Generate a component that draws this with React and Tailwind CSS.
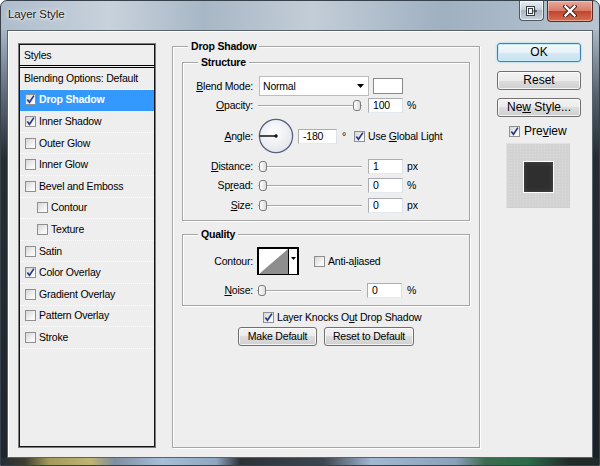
import React from 'react';

const styleItems = [
  { label: 'Drop Shadow', checked: true, selected: true },
  { label: 'Inner Shadow', checked: true },
  { label: 'Outer Glow' },
  { label: 'Inner Glow' },
  { label: 'Bevel and Emboss' },
  { label: 'Contour', sub: true },
  { label: 'Texture', sub: true },
  { label: 'Satin' },
  { label: 'Color Overlay', checked: true },
  { label: 'Gradient Overlay' },
  { label: 'Pattern Overlay' },
  { label: 'Stroke' },
];

const U = ({ children }) => <span className="underline underline-offset-[1px]">{children}</span>;

const Check = ({ checked }) => (
  <span className="flex h-[11px] w-[11px] shrink-0 items-center justify-center border border-[#8f8f8f] bg-[linear-gradient(135deg,#d6d6d6,#f4f4f4_65%,#ffffff)]">
    {checked && (
      <svg width="9" height="9" viewBox="0 0 9 9">
        <path d="M1.3 4.4 L3.5 7.3 L7.9 0.6" fill="none" stroke="#26398e" strokeWidth="1.7" />
      </svg>
    )}
  </span>
);

const Slider = ({ full, className = '' }) => (
  <div
    className={`flex h-[11px] w-[104px] shrink-0 items-center bg-[linear-gradient(to_bottom,transparent_5px,#a9a9a9_5px,#a9a9a9_6px,#ffffff_6px,#ffffff_7px,transparent_7px)] px-[1px] ${full ? 'justify-end' : 'justify-start'} ${className}`}
  >
    <div className="h-[11px] w-[8px] rounded-[3px] border border-[#7b7b7b] bg-[linear-gradient(to_right,#ffffff,#dcdcdc)]" />
  </div>
);

const Field = ({ value, className = 'w-[35px]' }) => (
  <div className={`flex h-[15px] shrink-0 items-center border border-[#abadb3] border-r-[#dbdfe6] border-b-[#e3e9ef] bg-white pl-[4px] ${className}`}>
    <span>{value}</span>
  </div>
);

const Label = ({ children }) => <div className="w-[70px] shrink-0 text-right">{children}</div>;

const Btn = ({ children, className = '', primary }) => (
  <div
    className={`flex h-[19px] shrink-0 items-center justify-center rounded-[3px] border ${
      primary
        ? 'border-[#3c7fb1] bg-[linear-gradient(#f4f9fc_0%,#e6f2f9_50%,#d6e9f4_50%,#c9e1ef_100%)] shadow-[0_0_2px_#7fc9f0,inset_0_0_0_1px_#c6ecfc]'
        : 'border-[#707070] bg-[linear-gradient(#f2f2f2_0%,#ebebeb_50%,#dddddd_50%,#cfcfcf_100%)] shadow-[inset_0_0_0_1px_rgba(255,255,255,0.75)]'
    } ${className}`}
  >
    <span>{children}</span>
  </div>
);

const Group = ({ title, className = '', children }) => (
  <div className={`flex flex-col border border-[#a6a6a6] shadow-[1px_1px_0_#ffffff,inset_1px_1px_0_#ffffff] ${className}`}>
    <div className="-mt-[7px] ml-[15px] self-start bg-[#eeeeee] px-[3px] font-bold leading-[13px]">{title}</div>
    {children}
  </div>
);

const Dial = () => (
  <svg width="36" height="36" viewBox="0 0 36 36" className="shrink-0">
    <defs>
      <radialGradient id="dialFill" cx="0.45" cy="0.4" r="0.65">
        <stop offset="0" stopColor="#ffffff" />
        <stop offset="1" stopColor="#e1e4ea" />
      </radialGradient>
    </defs>
    <circle cx="18" cy="18" r="16.6" fill="url(#dialFill)" stroke="#56627f" strokeWidth="1.3" />
    <line x1="1.6" y1="18" x2="18" y2="18" stroke="#111111" strokeWidth="1.3" />
    <circle cx="18" cy="18" r="1.7" fill="#111111" />
  </svg>
);

const ContourPicker = () => (
  <svg width="42" height="28" viewBox="0 0 42 28" className="shrink-0">
    <rect x="0" y="0" width="42" height="28" fill="#000000" />
    <rect x="2" y="2" width="38" height="25" fill="#ffffff" />
    <polygon points="2,27 31,2 31,27" fill="#8e8e8e" />
    <rect x="31" y="0" width="1" height="28" fill="#000000" />
    <polygon points="34,10 39,10 36.5,13" fill="#000000" />
  </svg>
);

const TitleBar = () => (
  <div className="flex h-[29px] shrink-0 items-start">
    <div className="ml-[7px] mt-[7px] text-[11.5px] tracking-[-0.1px] text-[#1b1b1b] [text-shadow:0_0_6px_#ffffff,0_0_3px_#ffffff]">
      Layer Style
    </div>
    <div className="ml-auto mr-[6px] flex items-start gap-[3px]">
      <div className="flex h-[20px] w-[25px] items-center justify-center rounded-b-[4px] border border-t-0 border-[#4c5966] bg-[linear-gradient(#e9eef3,#c3ccd6_50%,#a9b6c3_50%,#c8d2dc)] shadow-[inset_0_0_0_1px_rgba(255,255,255,0.6)]">
        <svg width="11" height="10" viewBox="0 0 11 10">
          <rect x="0.5" y="0.5" width="8" height="9" fill="#f4f4f4" stroke="#3a3f45" />
          <rect x="2.5" y="2.5" width="4" height="5" fill="none" stroke="#3a3f45" />
          <path d="M6 5 H10.5 M9 3.5 L10.5 5 L9 6.5" fill="none" stroke="#3a3f45" />
        </svg>
      </div>
      <div className="flex h-[21px] w-[46px] items-center justify-center rounded-b-[4px] border border-t-0 border-[#5b2a22] bg-[linear-gradient(#e9a99a,#d77a66_50%,#c0432d_50%,#d46f53)] shadow-[inset_0_0_0_1px_rgba(255,220,210,0.5)]">
        <svg width="14" height="12" viewBox="0 0 14 12">
          <path d="M2.5 1.5 L11.5 10.5 M11.5 1.5 L2.5 10.5" stroke="#3b1a14" strokeWidth="4.2" strokeLinecap="square" />
          <path d="M2.5 1.5 L11.5 10.5 M11.5 1.5 L2.5 10.5" stroke="#ffffff" strokeWidth="2.4" strokeLinecap="square" />
        </svg>
      </div>
    </div>
  </div>
);

const StylesList = () => (
  <div className="h-[405px] w-[138px] shrink-0 border border-[#7c7c7c]">
    <div className="flex h-full flex-col border border-[#141414]">
      <div className="flex h-[20px] items-center pl-[4px]">Styles</div>
      <div className="h-[3px] border-y border-black" />
      <div className="flex h-[21.6px] items-center border-b border-dotted border-[#fdfdfd] pl-[4px]">
        Blending Options: Default
      </div>
      {styleItems.map((item) => (
        <div
          key={item.label}
          className={`flex h-[21.6px] items-center gap-[3px] border-b border-dotted ${
            item.selected ? 'border-[#3399ff] bg-[#3399ff] font-bold text-white' : 'border-[#fdfdfd]'
          } ${item.sub ? 'pl-[17px]' : 'pl-[5px]'}`}
        >
          <Check checked={item.checked} />
          <span>{item.label}</span>
        </div>
      ))}
    </div>
  </div>
);

const DropShadowPanel = () => (
  <Group title="Drop Shadow" className="ml-[16px] mt-[3px] h-[402px] w-[308px] shrink-0">
    <Group title="Structure" className="ml-[9px] mt-[9px] h-[159px] w-[288px]">
      <div className="mt-[7px] flex h-[20px] items-center">
        <Label>
          <U>B</U>lend Mode:
        </Label>
        <div className="ml-[6px] flex h-[20px] w-[110px] items-center justify-between border border-[#bdbdbd] bg-white pl-[3px] pr-[4px]">
          <span>Normal</span>
          <svg width="7" height="4" viewBox="0 0 7 4">
            <polygon points="0,0 7,0 3.5,4" fill="#000000" />
          </svg>
        </div>
        <div className="ml-[4px] h-[16px] w-[30px] border border-[#8a8a8a] bg-white" />
      </div>
      <div className="mt-[1px] flex h-[16px] items-center">
        <Label>
          <U>O</U>pacity:
        </Label>
        <Slider full className="ml-[5px]" />
        <Field value="100" className="ml-[6px] w-[35px]" />
        <span className="ml-[4px]">%</span>
      </div>
      <div className="mt-[5px] flex h-[36px] items-center">
        <Label>
          <U>A</U>ngle:
        </Label>
        <div className="ml-[5px]">
          <Dial />
        </div>
        <Field value="-180" className="ml-[4px] w-[39px]" />
        <span className="ml-[5px]">°</span>
        <div className="ml-[8px] flex items-center gap-[3px]">
          <Check checked />
          <span>
            Use <U>G</U>lobal Light
          </span>
        </div>
      </div>
      {[
        { k: 'D', rest: 'istance:', v: '1', unit: 'px', mt: 'mt-[4px]' },
        { k: 'r', pre: 'Sp', rest: 'ead:', v: '0', unit: '%', mt: 'mt-[3px]' },
        { k: 'S', rest: 'ize:', v: '0', unit: 'px', mt: 'mt-[4px]' },
      ].map((r) => (
        <div key={r.rest} className={`${r.mt} flex h-[16px] items-center`}>
          <Label>
            {r.pre}
            <U>{r.k}</U>
            {r.rest}
          </Label>
          <Slider className="ml-[5px]" />
          <Field value={r.v} className="ml-[6px] w-[35px]" />
          <span className="ml-[4px]">{r.unit}</span>
        </div>
      ))}
    </Group>

    <Group title="Quality" className="ml-[9px] mt-[13px] h-[72px] w-[288px]">
      <div className="mt-[6px] flex h-[28px] items-center">
        <Label>Contour:</Label>
        <div className="ml-[4px]">
          <ContourPicker />
        </div>
        <div className="ml-[15px] flex items-center gap-[3px]">
          <Check />
          <span>
            Anti-a<U>l</U>iased
          </span>
        </div>
      </div>
      <div className="mt-[7px] flex h-[16px] items-center">
        <Label>
          <U>N</U>oise:
        </Label>
        <Slider className="ml-[4px]" />
        <Field value="0" className="ml-[6px] w-[35px]" />
        <span className="ml-[5px]">%</span>
      </div>
    </Group>

    <div className="ml-[90px] mt-[5px] flex h-[13px] items-center gap-[3px]">
      <Check checked />
      <span>
        Layer Knocks O<U>u</U>t Drop Shadow
      </span>
    </div>
    <div className="ml-[65px] mt-[3px] flex gap-[7px]">
      <Btn className="h-[18px] w-[79px]">Make Default</Btn>
      <Btn className="h-[18px] w-[90px]">Reset to Default</Btn>
    </div>
  </Group>
);

const RightColumn = () => (
  <div className="ml-[17px] flex w-[84px] shrink-0 flex-col text-[12px] tracking-normal">
    <Btn primary className="w-[84px]">
      OK
    </Btn>
    <Btn className="mt-[9px] w-[84px]">Reset</Btn>
    <Btn className="mt-[8px] w-[84px]">
      Ne<U>w</U> Style...
    </Btn>
    <div className="ml-[12px] mt-[8px] flex h-[13px] items-center gap-[4px]">
      <Check checked />
      <span>
        Pre<U>v</U>iew
      </span>
    </div>
    <div className="ml-[9px] mt-[5px] flex h-[65px] w-[64px] items-center justify-center border border-[#e2e2e2] border-r-[#cfcfcf] border-b-[#cfcfcf] bg-[#d3d3d3] bg-[radial-gradient(#dbdbdb_0.6px,transparent_0.8px)] bg-[length:3px_3px]">
      <div className="mt-[2px] h-[32px] w-[31px] border border-white bg-[#2f2f2f] shadow-[inset_0_0_5px_#4a4a4a]" />
    </div>
  </div>
);

export default function App() {
  return (
    <div className="flex h-[466px] w-[600px] flex-col overflow-hidden rounded-t-[7px] border border-[#36414c] bg-[linear-gradient(to_right,#aebccb,#c8d2dc_18%,#a8b7c6_34%,#c3cdd7_52%,#9fb0c1_74%,#b8c4d0)] font-['Liberation_Sans',Arial,sans-serif] text-[10.5px] leading-[13px] tracking-[-0.2px] text-black">
      <TitleBar />
      <div className="flex flex-1">
        <div className="w-[6px] bg-[linear-gradient(#a7b6c5,#5d6b78_15%,#262d34_30%,#20262c)]" />
        <div className="flex h-[428px] w-[586px] border border-[#56626e] bg-[#eeeeee] pl-[10px] pt-[12px] shadow-[inset_1px_1px_0_#ffffff]">
          <StylesList />
          <DropShadowPanel />
          <RightColumn />
        </div>
        <div className="w-[6px] bg-[linear-gradient(#aab8c6,#56616c_15%,#252b31_30%,#1c2126)]" />
      </div>
      <div className="h-[7px] bg-[linear-gradient(to_right,#262d33_0%,#3e3e30_4%,#a39a5b_8%,#bfb471_15%,#7d8e9f_19%,#a6bfd9_27%,#8ea6bf_36%,#2d3237_40%,#3d4550_54%,#a1b8d2_62%,#8aa1b9_76%,#3d6b4e_81%,#2b6c46_88%,#232b29_95%)]" />
    </div>
  );
}
